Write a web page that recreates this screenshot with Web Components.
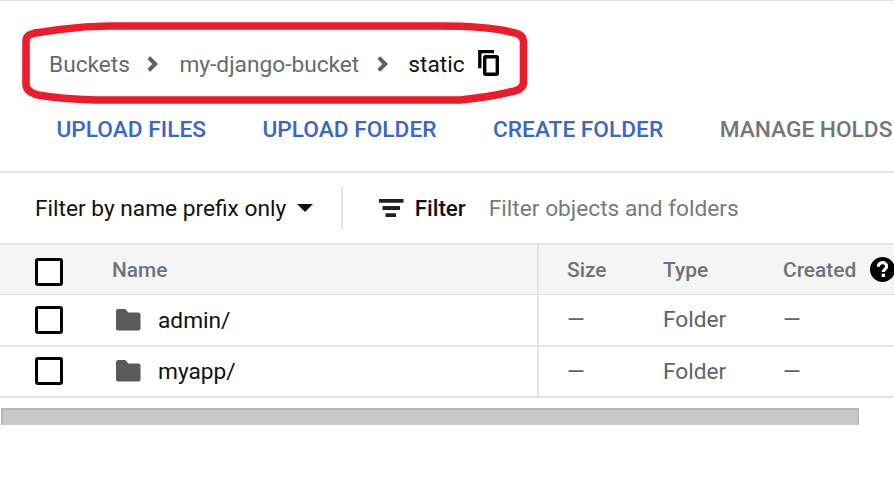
<!DOCTYPE html>
<html><head><meta charset="utf-8"><style>
html,body{margin:0;padding:0;background:#fff}
body{width:894px;height:496px;overflow:hidden;font-family:Roboto,"Liberation Sans",sans-serif}
</style></head><body>
<gcs-page></gcs-page>
<script>
const def=(name,html)=>{customElements.define(name,class extends HTMLElement{constructor(){super();this.attachShadow({mode:'open'}).innerHTML=html(this)}})};
const chev='<svg width="16" height="18" viewBox="0 0 16 18"><path d="M2.800 2.600L9.200 9 2.800 15.400" fill="none" stroke="#5f6368" stroke-width="4"/></svg>';
def('gcs-breadcrumb',()=>`<style>
:host{display:flex;align-items:center;height:64px;padding:31px 0 0 49px;font-size:22.700px;color:#666a6e;position:relative;white-space:nowrap}
.c{margin:0 17px 0 16.500px;display:flex}
.c.l{margin-right:16.500px}
b{font-weight:400;color:#111}
svg.copy{margin:0 0 2px 12.500px}
svg.ring{position:absolute;left:0;top:-1px}
</style>
<span>Buckets</span><span class="c">${chev}</span><span>my-django-bucket</span><span class="c l">${chev}</span><b>static</b>
<svg class="copy" width="24" height="26" viewBox="0 0 24 26"><path d="M2.800 18.300V1.700H17" fill="none" stroke="#000" stroke-width="3.300"/><rect x="7.700" y="6.700" width="12.600" height="17.600" rx="1" fill="none" stroke="#000" stroke-width="3.400"/></svg>
<svg class="ring" width="540" height="110" viewBox="0 0 540 110"><path d="M26 40Q26 35 35 33L60 29.500Q85 26 110 26H440Q490 26 515 33Q523.500 35 523.500 42V82Q523.500 90 510 92Q490 97 460 100H95Q60 99 38 95Q26 92 26 84Z" fill="none" stroke="#ed1c2b" stroke-width="7.600"/></svg>`);
def('gcs-actions',()=>`<style>
:host{display:flex;box-sizing:border-box;height:77px;padding:17px 0 0 56.500px;gap:56.500px;font-size:22.700px;font-weight:500;color:#3b67c5;white-space:nowrap;border-bottom:2px solid #e4e4e4;align-items:flex-start;line-height:34px}
.off{color:#74767a}
</style><span>UPLOAD FILES</span><span>UPLOAD FOLDER</span><span>CREATE FOLDER</span><span class="off">MANAGE HOLDS</span>`);
def('gcs-filter',()=>`<style>
:host{display:flex;align-items:center;height:70px;padding-left:35px;font-size:22.700px;color:#111;white-space:nowrap}
.tri{margin-left:11px;width:0;height:0;border:8.500px solid transparent;border-top:8.500px solid #111;border-bottom:0}
.d{width:2px;height:42px;background:#e3e3e3;margin:0 36px 0 28px}
.f{font-weight:500;font-size:22.400px;margin-left:11px}.p{color:#777a7d;margin-left:23px}
svg{display:block}
</style><span>Filter by name prefix only</span><span class="tri"></span><span class="d"></span>
<svg width="24.500" height="18" viewBox="0 0 24.500 18"><path d="M0 0H24.500V3.700H0ZM3.500 7H21V11H3.500ZM6.500 14.300H17V18H6.500Z" fill="#222"/></svg>
<span class="f">Filter</span><span class="p">Filter objects and folders</span>`);
def('gcs-check',()=>`<style>:host{display:block;width:28px;height:28px;box-sizing:border-box;border:3px solid #000;border-radius:3px;background:#fff}</style>`);
def('gcs-row',h=>`<style>
:host{display:grid;grid-template-columns:537px 2px 124px 120px 1fr;align-items:center;height:49px;border-bottom:2px solid #e4e4e4;font-size:22.700px;color:#5f6368;white-space:nowrap}
.n{display:flex;align-items:center;padding-left:35px}
gcs-check{margin:0 53px 1px 0}
svg{margin:0 17.500px 1px 0}
.nm{color:#111}
.s{background:#e4e4e4;height:51px;margin-bottom:-2px}.sz{padding-left:28px}
.sz,.ty,.cr{padding-bottom:2px}
:host([last]) .sz,:host([last]) .ty,:host([last]) .cr{padding-bottom:0}
</style><div class="n"><gcs-check></gcs-check><svg width="24.500" height="22" viewBox="0 0 26 22" preserveAspectRatio="none"><path d="M2.500 0H10L13 3.500H24C25 3.500 26 4.500 26 5.500V19.500C26 20.500 25 21.500 24 21.500H2C1 21.500 0 20.500 0 19.500V2.500C0 1 1 0 2.500 0Z" fill="#5a5a5a"/></svg><span class="nm">${h.getAttribute('name')}</span></div><div class="s"></div><div class="sz">—</div><div class="ty">Folder</div><div class="cr">—</div>`);
def('gcs-head',()=>`<style>
:host{display:grid;grid-template-columns:537px 2px 124px 120px 1fr;align-items:center;height:49px;background:#f5f5f5;border-top:2px solid #e4e4e4;border-bottom:1px solid #e4e4e4;margin-bottom:1px;font-size:20.900px;font-weight:500;color:#6f7276;white-space:nowrap}
.n{display:flex;align-items:center;padding-left:35px}
gcs-check{margin:3px 49px 0 0}
.s{background:#e4e4e4;height:51px}.sz{padding-left:28px}
.c{display:flex;align-items:center;gap:14px}
.t{padding-bottom:2px}
svg{display:block}
</style><div class="n"><gcs-check></gcs-check><span class="t">Name</span></div><div class="s"></div><div class="sz t">Size</div><div class="t">Type</div><div class="c t"><span>Created</span><svg width="25" height="25" viewBox="0 0 24 24"><circle cx="12" cy="12" r="12"/><path d="M8 9.300C8 7 9.800 5.400 12 5.400S16 6.900 16 9C16 11.500 12.800 11.500 12.800 14.500" fill="none" stroke="#fff" stroke-width="3"/><rect x="11.200" y="16" width="3.200" height="3.200" fill="#fff"/></svg></div>`);
def('gcs-scrollbar',()=>`<style>:host{display:block;width:858px;height:17px;margin:10px 0 0 1px;box-sizing:border-box;background:#c9c9c9;border-top:2px solid #b5b5b5;border-left:2px solid #bbb;border-right:2px solid #bbb}</style>`);
def('gcs-page',()=>`<style>:host{display:block;width:894px;height:496px;border-top:1px solid #e0e0e0;box-sizing:border-box;overflow:hidden}</style>
<gcs-breadcrumb></gcs-breadcrumb><gcs-actions></gcs-actions><gcs-filter></gcs-filter><gcs-head></gcs-head><gcs-row name="admin/"></gcs-row><gcs-row name="myapp/" last></gcs-row><gcs-scrollbar></gcs-scrollbar>`);
</script></body></html>
